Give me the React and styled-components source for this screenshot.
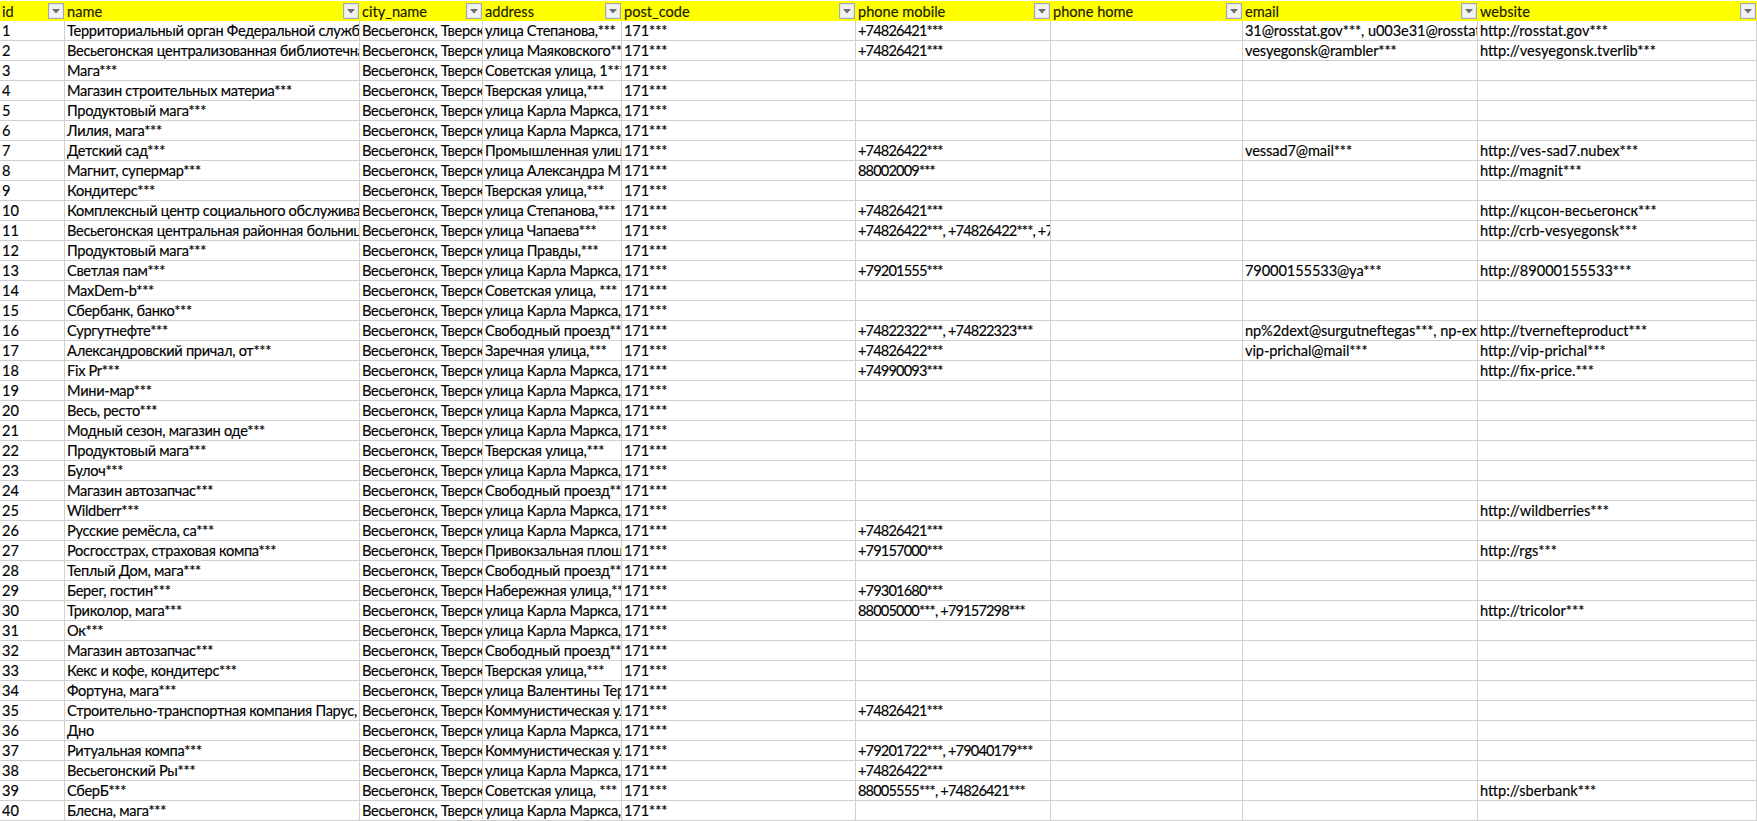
import React from 'react';
import styled, { createGlobalStyle } from 'styled-components';

const Global = createGlobalStyle`
  html, body { margin: 0; padding: 0; background: #fff; }
  body { width: 1757px; height: 821px; overflow: hidden; }
`;
const widths = [65, 295, 123, 139, 234, 195, 192, 235, 279];
const Sheet = styled.div`
  display: grid;
  grid-template-columns: ${widths.map(w => w + 'px').join(' ')};
  grid-auto-rows: 20px;
  width: 1757px;
  padding-top: 1px;
  font-family: Lato, "Liberation Sans", sans-serif;
  font-size: 14.6px;
  color: #000;
  -webkit-text-stroke: 0.15px currentColor;
`;
const Head = styled.div`
  height: 20px;
  background: #ffff00;
  position: relative;
  padding-left: 2px;
  line-height: 21px;
  box-sizing: border-box;
  color: #1a1a00;
`;
const Filter = styled.span`
  position: absolute;
  right: 1px;
  top: 2px;
  width: 16px;
  height: 16px;
  box-sizing: border-box;
  border: 1px solid #9ea9bb;
  box-shadow: inset 0 0 0 1px #e2e5ea;
  background: #f2f2f2;
  display: flex;
  align-items: center;
  justify-content: center;
`;
const Cell = styled.div`
  box-sizing: border-box;
  height: 20px;
  line-height: 20px;
  padding-left: 2px;
  border-right: 1px solid #d0d0d0;
  border-bottom: 1px solid #d0d0d0;
  white-space: nowrap;
  overflow: hidden;
  letter-spacing: ${p => p.$track || 0}px;
`;
const heads = ['id','name','city_name','address','post_code','phone mobile','phone home','email','website'];
const rows = [
['Территориальный орган Федеральной службы государственной','улица Степанова,***','+74826421***','31@rosstat.gov***, u003e31@rosstat.gov***','http://rosstat.gov***'],
['Весьегонская централизованная библиотечная система','улица Маяковского***','+74826421***','vesyegonsk@rambler***','http://vesyegonsk.tverlib***'],
['Мага***','Советская улица, 1***'],
['Магазин строительных материа***','Тверская улица,***'],
['Продуктовый мага***','улица Карла Маркса, 1'],
['Лилия, мага***','улица Карла Маркса, 1'],
['Детский сад***','Промышленная улица,***','+74826422***','vessad7@mail***','http://ves-sad7.nubex***'],
['Магнит, супермар***','улица Александра Матросова','88002009***','','http://magnit***'],
['Кондитерс***','Тверская улица,***'],
['Комплексный центр социального обслуживания','улица Степанова,***','+74826421***','','http://кцсон-весьегонск***'],
['Весьегонская центральная районная больница','улица Чапаева***','+74826422***, +74826422***, +74826422***','','http://crb-vesyegonsk***'],
['Продуктовый мага***','улица Правды,***'],
['Светлая пам***','улица Карла Маркса, 1','+79201555***','79000155533@ya***','http://89000155533***'],
['MaxDem-b***','Советская улица, ***'],
['Сбербанк, банко***','улица Карла Маркса, 1'],
['Сургутнефте***','Свободный проезд***','+74822322***, +74822323***','np%2dext@surgutneftegas***, np-ext@surgutneftegas***','http://tvernefteproduct***'],
['Александровский причал, от***','Заречная улица,***','+74826422***','vip-prichal@mail***','http://vip-prichal***'],
['Fix Pr***','улица Карла Маркса, 1','+74990093***','','http://fix-price.***'],
['Мини-мар***','улица Карла Маркса,***'],
['Весь, ресто***','улица Карла Маркса, 1'],
['Модный сезон, магазин оде***','улица Карла Маркса, 1'],
['Продуктовый мага***','Тверская улица,***'],
['Булоч***','улица Карла Маркса, 1'],
['Магазин автозапчас***','Свободный проезд***'],
['Wildberr***','улица Карла Маркса, 1','','','http://wildberries***'],
['Русские ремёсла, са***','улица Карла Маркса, 1','+74826421***'],
['Росгосстрах, страховая компа***','Привокзальная площадь','+79157000***','','http://rgs***'],
['Теплый Дом, мага***','Свободный проезд***'],
['Берег, гостин***','Набережная улица,***','+79301680***'],
['Триколор, мага***','улица Карла Маркса, 1','88005000***, +79157298***','','http://tricolor***'],
['Ок***','улица Карла Маркса, 1'],
['Магазин автозапчас***','Свободный проезд***'],
['Кекс и кофе, кондитерс***','Тверская улица,***'],
['Фортуна, мага***','улица Валентины Терешковой'],
['Строительно-транспортная компания Парус, АО','Коммунистическая улица','+74826421***'],
['Дно','улица Карла Маркса, 1'],
['Ритуальная компа***','Коммунистическая улица','+79201722***, +79040179***'],
['Весьегонский Ры***','улица Карла Маркса, 1','+74826422***'],
['СберБ***','Советская улица, ***','88005555***, +74826421***','','http://sberbank***'],
['Блесна, мага***','улица Карла Маркса, 1'],
];
const FilterIcon = () => (
  <svg width="8" height="5" viewBox="0 0 8 5"><path d="M0 0h8L4 4.5z" fill="#6d6d6d" /></svg>
);
export default function App() {
  return (
    <>
      <Global />
      <Sheet>
        {heads.map(h => (
          <Head key={h}>{h}<Filter><FilterIcon /></Filter></Head>
        ))}
        {rows.map((r, i) => (
          <React.Fragment key={i}>
            <Cell>{i + 1}</Cell>
            <Cell $track={-0.3}>{r[0]}</Cell>
            <Cell $track={-0.3}>Весьегонск, Тверская область</Cell>
            <Cell $track={-0.3}>{r[1]}</Cell>
            <Cell $track={-0.1}>171***</Cell>
            <Cell $track={-0.85}>{r[2] || ''}</Cell>
            <Cell />
            <Cell $track={-0.1}>{r[3] || ''}</Cell>
            <Cell>{r[4] || ''}</Cell>
          </React.Fragment>
        ))}
      </Sheet>
    </>
  );
}
